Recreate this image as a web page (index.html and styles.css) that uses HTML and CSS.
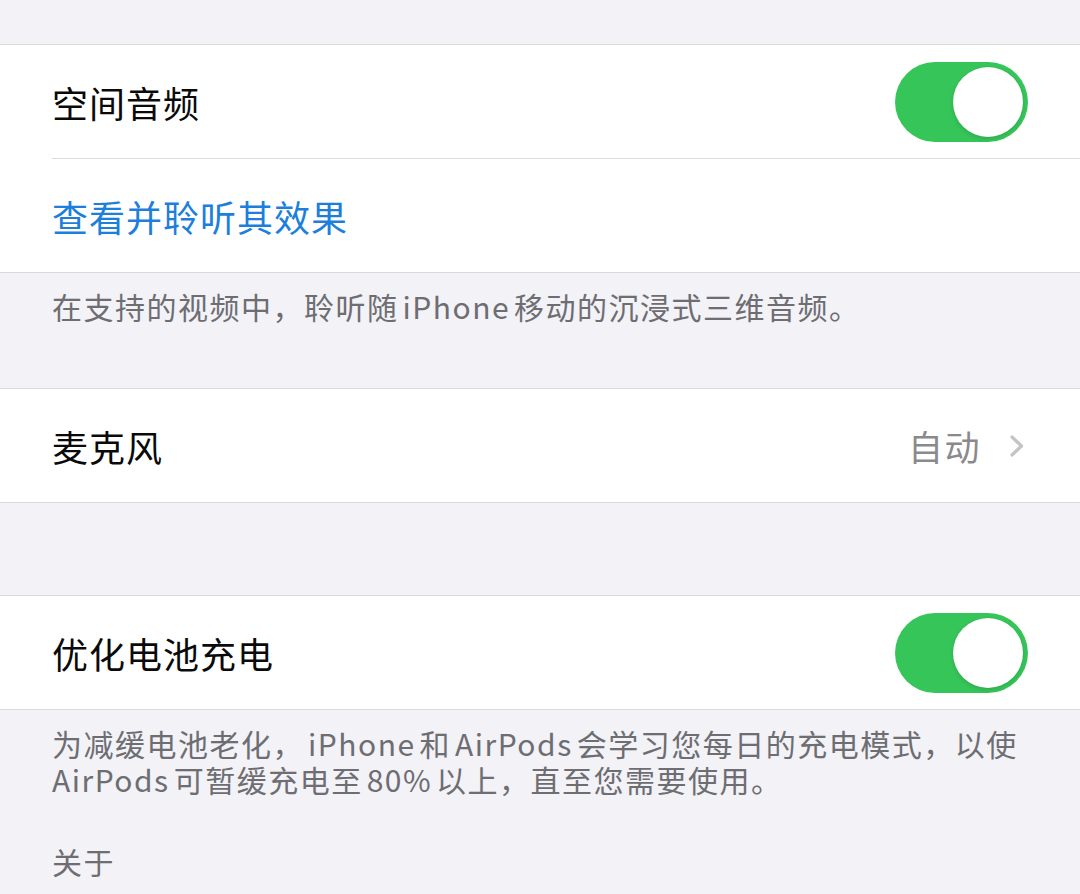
FILE: index.html
```html
<!DOCTYPE html>
<html>
<head>
  <meta charset="utf-8">
  <link rel="stylesheet" href="styles.css">
</head>
<body>
  <div class="page">
    <div class="spacer-top"></div>

    <div class="group">
      <div class="cell">
        <span class="label">空间音频</span>
        <span class="switch on"><span class="knob"></span></span>
      </div>
      <div class="cell">
        <span class="link">查看并聆听其效果</span>
      </div>
    </div>
    <div class="footer footer-short">在支持的视频中，聆听随<span class="latin">iPhone</span>移动的沉浸式三维音频。</div>

    <div class="group">
      <div class="cell">
        <span class="label">麦克风</span>
        <span class="detail">
          <span class="value">自动</span>
          <svg class="chevron" width="16" height="24" viewBox="0 0 16 24">
            <path d="M3 3 L12.5 12 L3 21" fill="none" stroke="#c4c4c7" stroke-width="3.2" stroke-linecap="round" stroke-linejoin="round"/>
          </svg>
        </span>
      </div>
    </div>

    <div class="gap"></div>

    <div class="group">
      <div class="cell">
        <span class="label">优化电池充电</span>
        <span class="switch on"><span class="knob"></span></span>
      </div>
    </div>
    <div class="footer">为减缓电池老化，<span class="latin">iPhone</span>和<span class="latin">AirPods</span>会学习您每日的充电模式，以使<span class="latin first">AirPods</span>可暂缓充电至<span class="latin">80%</span>以上，直至您需要使用。</div>

    <div class="section-header">关于</div>
  </div>
</body>
</html>
```

FILE: styles.css
```css
* {
  margin: 0;
  padding: 0;
  box-sizing: border-box;
}

body {
  width: 1080px;
  height: 894px;
  background: #f2f2f7;
  font-family: "Noto Sans CJK SC", "Noto Sans", sans-serif;
  color: #000;
  overflow: hidden;
}

.page {
  display: flex;
  flex-direction: column;
}

.spacer-top {
  height: 44px;
}

.gap {
  height: 92px;
}

/* grouped table section */
.group {
  background: #ffffff;
  border-top: 1px solid #d9d9de;
  border-bottom: 1px solid #d9d9de;
}

.cell {
  box-sizing: content-box;
  height: 113px;
  margin-left: 52px;
  padding-right: 52px;
  display: flex;
  align-items: center;
  justify-content: space-between;
}

.cell + .cell {
  border-top: 1px solid #dcdce0;
}

.label {
  font-size: 36px;
  letter-spacing: 1px;
  color: #0a0a0a;
}

.link {
  font-size: 36px;
  letter-spacing: 1px;
  color: #1d7fdb;
}

.detail {
  display: flex;
  align-items: center;
  gap: 28px;
  margin-right: 3px;
}

.value {
  font-size: 35px;
  letter-spacing: 1.5px;
  color: #8a8a8e;
}

/* iOS switch */
.switch {
  width: 133px;
  height: 80px;
  border-radius: 40px;
  background: #e5e5ea;
  display: flex;
  align-items: center;
  padding: 0 5px;
}

.switch.on {
  background: #35c559;
  justify-content: flex-end;
}

.knob {
  width: 70px;
  height: 70px;
  border-radius: 50%;
  background: #ffffff;
  box-shadow: 0 2px 4px rgba(0, 0, 0, 0.12), 0 0 0 0.5px rgba(0, 0, 0, 0.04);
}

.footer {
  padding: 15px 50px 0 52px;
  font-size: 30px;
  line-height: 36px;
  letter-spacing: 1.5px;
  color: #6d6d72;
}

/* gap between CJK and latin runs, like iOS */
.latin {
  margin: 0 4px;
}

.latin.first {
  margin-left: 0;
}

.footer-short {
  height: 115px;
}

.section-header {
  padding: 46px 52px 0;
  font-size: 30px;
  line-height: 36px;
  letter-spacing: 1.5px;
  color: #6d6d72;
}
```
